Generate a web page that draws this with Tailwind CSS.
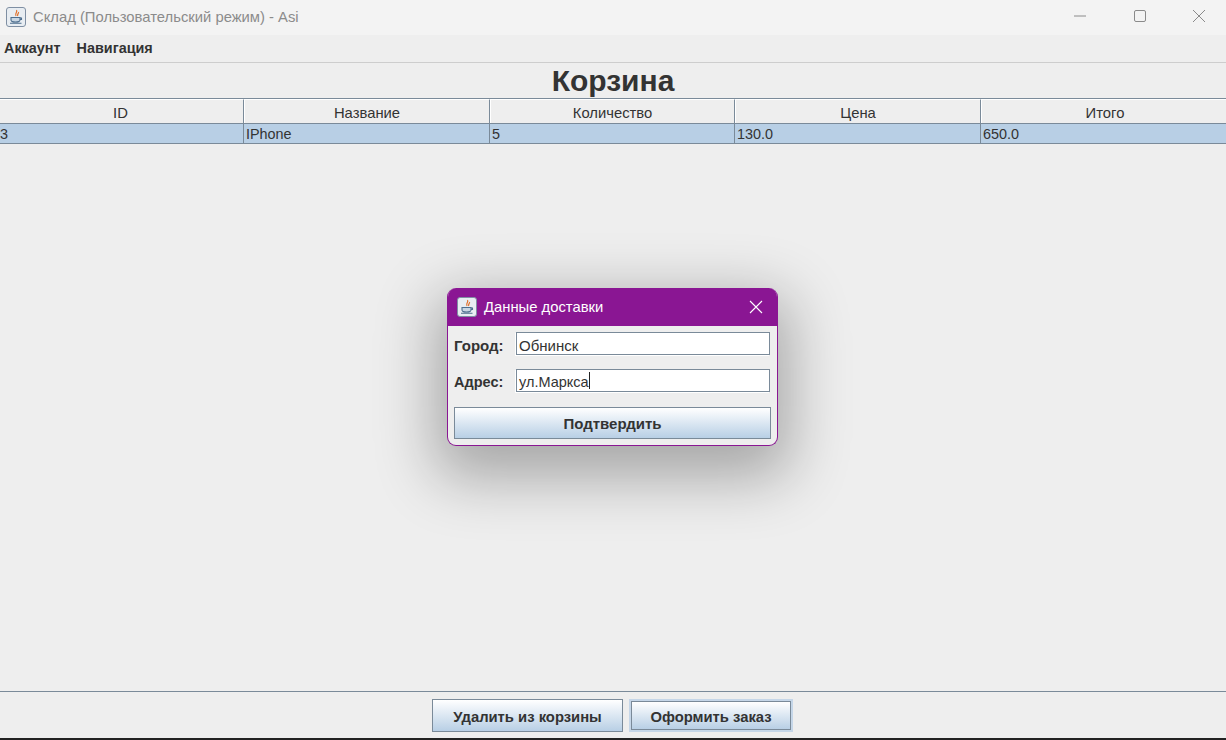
<!DOCTYPE html>
<html lang="ru">
<head>
  <meta charset="UTF-8">
  <title>Склад</title>
  <script src="https://cdn.jsdelivr.net/npm/@tailwindcss/browser@4"></script>
</head>
<body class="bg-[#eeeeee] font-['Liberation_Sans',Arial,sans-serif] text-[#333333] overflow-hidden">
  <div class="relative w-[1226px] h-[740px] flex flex-col overflow-hidden">
    <!-- Title bar -->
    <div class="h-[35px] bg-[#f3f3f3] flex items-center shrink-0">
      <svg class="w-[20px] h-[20px] ml-[6px] mt-[-2px]" viewBox="0 0 20 20">
        <rect x="0.5" y="0.5" width="19" height="19" rx="2.5" fill="#e8edf2" stroke="#7f8fa3"/>
        <path d="M10.5 3c1.5 2-2 3 -.5 6M12.5 5c.5 1.500-1.500 2-.8 4" stroke="#e0702a" stroke-width="1.200" fill="none"/>
        <path d="M5 10.500h9v2.500c0 1.500-1.500 2-4.500 2S5 14.500 5 13zM14 11h1.500v1.500H14M4 16.200h11.500" stroke="#4e6f8f" stroke-width="1.100" fill="#c8d6e3"/>
      </svg>
      <span class="ml-[7px] text-[14.8px] text-[#8b8b8b] mt-[-1px]">Склад (Пользовательский режим) - Asi</span>
      <div class="ml-auto flex items-center mt-[-3px]">
        <svg class="w-[14px] h-[14px] mr-[46px]" viewBox="0 0 14 14"><path d="M1 7h12" stroke="#8a8a8a" stroke-width="1"/></svg>
        <svg class="w-[14px] h-[14px] mr-[45px]" viewBox="0 0 14 14"><rect x="1.500" y="1.500" width="11" height="11" rx="1.500" fill="none" stroke="#8a8a8a" stroke-width="1"/></svg>
        <svg class="w-[14px] h-[14px] mr-[20px]" viewBox="0 0 14 14"><path d="M1 1l12 12M13 1L1 13" stroke="#8a8a8a" stroke-width="1"/></svg>
      </div>
    </div>
    <!-- Menu -->
    <div class="h-[28px] flex items-center border-b border-[#cdcdcd] shrink-0 text-[14.4px] font-bold">
      <span class="ml-[4px]">Аккаунт</span>
      <span class="ml-[16px]">Навигация</span>
    </div>
    <h1 class="h-[35px] flex items-center justify-center text-[30px] font-bold shrink-0">Корзина</h1>
    <!-- Table -->
    <div class="shrink-0 text-[14.8px] leading-[18px]">
      <div class="grid grid-cols-[244px_246px_245px_246px_245px] h-[26px] border-y border-[#7a8a99]">
        <div class="flex items-center justify-center border-r border-[#7a8a99] border-t border-t-white pt-[2px] pr-[2px]">ID</div>
        <div class="flex items-center justify-center border-r border-[#7a8a99] border-t border-t-white border-l border-l-white pt-[2px]">Название</div>
        <div class="flex items-center justify-center border-r border-[#7a8a99] border-t border-t-white border-l border-l-white pt-[2px]">Количество</div>
        <div class="flex items-center justify-center border-r border-[#7a8a99] border-t border-t-white border-l border-l-white pt-[2px]">Цена</div>
        <div class="flex items-center justify-center border-t border-t-white border-l border-l-white pt-[2px] pl-[2px]">Итого</div>
      </div>
      <div class="grid grid-cols-[244px_246px_245px_246px_245px] h-[20px] bg-[#b8cfe5] border-b border-[#7a8a99] text-[14.4px]">
        <div class="flex items-center border-r border-[#7a8a99] pt-[1px]">3</div>
        <div class="flex items-center border-r border-[#7a8a99] pl-[2px] pt-[1px]">IPhone</div>
        <div class="flex items-center border-r border-[#7a8a99] pl-[2px] pt-[1px]">5</div>
        <div class="flex items-center border-r border-[#7a8a99] pl-[2px] pt-[1px]">130.0</div>
        <div class="flex items-center pl-[2px] pt-[1px]">650.0</div>
      </div>
    </div>
    <div class="flex-1"></div>
    <!-- Bottom buttons -->
    <div class="h-[47px] border-t border-[#7a8a99] shrink-0 flex justify-center gap-[6px] pt-[7px] pr-[1px] text-[14.8px] font-bold">
      <button class="w-[191px] h-[33px] pt-[3px] border border-[#7a8a99] bg-gradient-to-b from-white to-[#b8cfe5]">Удалить из корзины</button>
      <div class="w-[164px] h-[33px] border-2 border-[#c5d6e8]">
        <button class="w-full h-full pt-[3px] border border-[#7a8a99] bg-gradient-to-b from-white to-[#b8cfe5]">Оформить заказ</button>
      </div>
    </div>
    <div class="h-[2px] bg-[#222222] shrink-0"></div>

    <!-- Dialog -->
    <div class="absolute left-[447px] top-[288px] w-[331px] h-[158px] rounded-[9px] overflow-hidden border border-[#8a1693] border-t-0 bg-[#eeeeee] shadow-[0_20px_60px_12px_rgba(0,0,0,0.3)]">
      <div class="h-[38px] bg-[#8a1693] flex items-center">
        <svg class="w-[20px] h-[20px] ml-[9px]" viewBox="0 0 20 20">
          <rect x="0.5" y="0.5" width="19" height="19" rx="2.5" fill="#e8edf2" stroke="#7f8fa3"/>
          <path d="M10.500 3c1.500 2-2 3-.5 6M12.500 5c.5 1.500-1.500 2-.8 4" stroke="#e0702a" stroke-width="1.200" fill="none"/>
          <path d="M5 10.500h9v2.500c0 1.500-1.500 2-4.500 2S5 14.500 5 13zM14 11h1.500v1.500H14M4 16.200h11.500" stroke="#4e6f8f" stroke-width="1.100" fill="#c8d6e3"/>
        </svg>
        <span class="ml-[7px] text-[14.8px] text-white">Данные доставки</span>
        <svg class="w-[14px] h-[14px] ml-auto mr-[14px]" viewBox="0 0 14 14"><path d="M1 1l12 12M13 1L1 13" stroke="#ffffff" stroke-width="1.100"/></svg>
      </div>
      <div class="px-[6px] pt-[6px] text-[14.5px]">
        <div class="flex items-center h-[23px]">
          <span class="w-[62px] font-bold text-[15px] pt-[5px]">Город:</span>
          <div class="w-[254px] h-[23px] bg-white border border-[#7a8a99] shadow-[-1px_1px_0_#ffffff] flex items-center pl-[2px] pt-[5px] text-[15px]">Обнинск</div>
        </div>
        <div class="flex items-center h-[23px] mt-[14px]">
          <span class="w-[62px] font-bold pt-[5px]">Адрес:</span>
          <div class="w-[254px] h-[23px] bg-white border border-[#7a8a99] shadow-[-1px_1px_0_#ffffff] flex items-center pl-[2px] pt-[5px]">ул.Маркса<span class="w-px h-[17px] bg-[#222222] mt-[-5px]"></span></div>
        </div>
        <button class="w-[317px] h-[32px] mt-[15px] pt-[2px] border border-[#7a8a99] bg-gradient-to-b from-white to-[#b8cfe5] font-bold text-[15px]">Подтвердить</button>
      </div>
    </div>
  </div>
</body>
</html>
